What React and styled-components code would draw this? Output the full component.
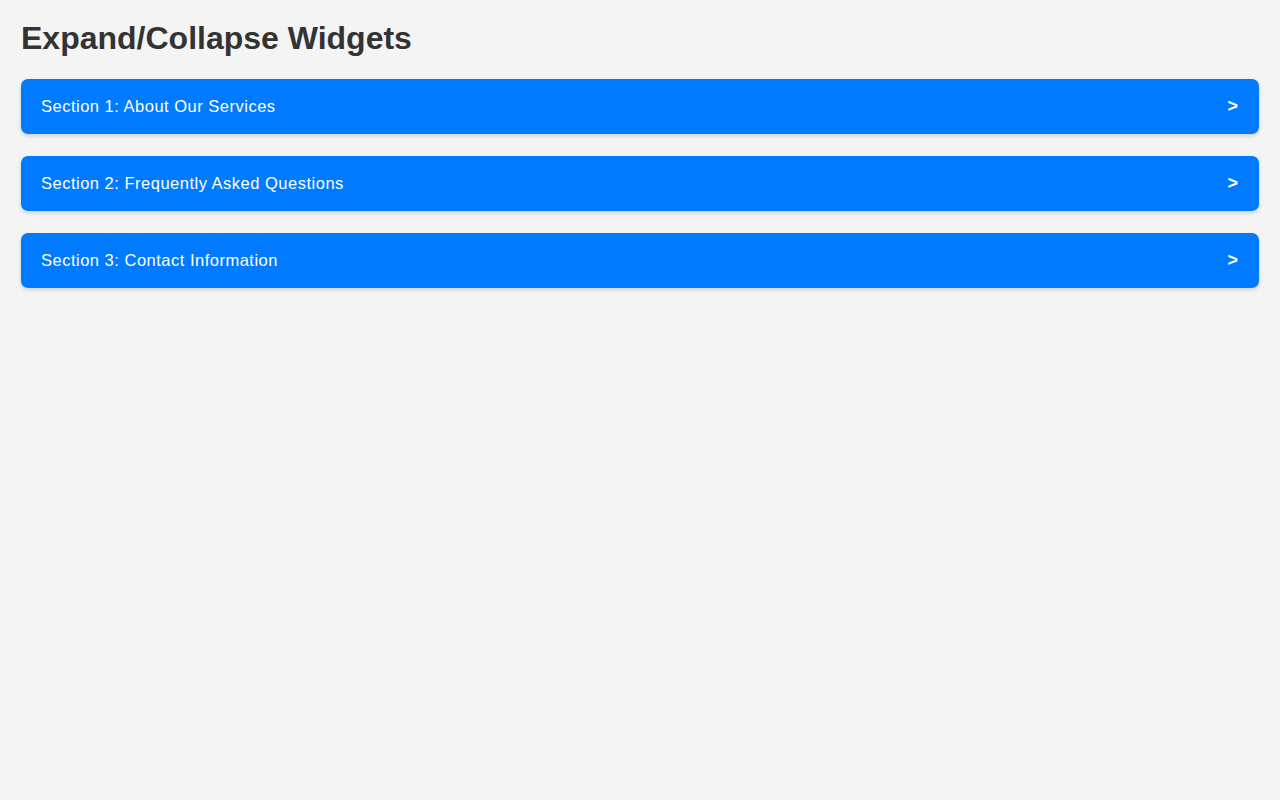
import React, { useState } from 'react';
import styled, { createGlobalStyle } from 'styled-components';

const GlobalStyle = createGlobalStyle`
    body {
        margin: 0;
        background-color: #f4f4f4;
        font-family: "Liberation Sans", Arial, Helvetica, sans-serif;
    }
`
const Page = styled.div`
    padding: 20px 21px;
`
const Title = styled.h1`
    margin: 0 0 22px;
    font-size: 32px;
    font-weight: bold;
    color: #333;
    line-height: 37px;
`
const List = styled.div`
    display: flex;
    flex-direction: column;
    gap: 22px;
`
const Section = styled.div`
    border-radius: 7px;
    box-shadow: 0 2px 4px rgba(0, 0, 0, 0.15);
    overflow: hidden;
`
const Header = styled.button`
    width: 100%;
    height: 55px;
    padding: 0 20px;
    display: flex;
    align-items: center;
    justify-content: space-between;
    background-color: #007bff;
    color: #fff;
    border: none;
    font-family: inherit;
    font-size: 16.5px;
    letter-spacing: 0.5px;
    cursor: pointer;
    text-align: left;
`
const Arrow = styled.span`
    font-size: 18px;
    font-weight: bold;
    letter-spacing: 0;
    margin-right: 1px;
    transform: rotate(${(props) => (props.open ? '90deg' : '0deg')});
    transition: transform 0.2s;
`
const Body = styled.div`
    padding: 15px 20px;
    background: #fff;
    color: #333;
    font-size: 15px;
`

const sections = [
    { id: 1, title: 'Section 1: About Our Services', text: 'We offer a wide range of services tailored to your needs.' },
    { id: 2, title: 'Section 2: Frequently Asked Questions', text: 'Find answers to the most common questions here.' },
    { id: 3, title: 'Section 3: Contact Information', text: 'Reach us by email or phone any time.' },
];

const App = () => {
    const [openId, setOpenId] = useState(null);
    return (
        <>
            <GlobalStyle />
            <Page>
                <Title>Expand/Collapse Widgets</Title>
                <List>
                    {sections.map(item => (
                        <Section key={item.id}>
                            <Header onClick={() => setOpenId(openId === item.id ? null : item.id)}>
                                <span>{item.title}</span>
                                <Arrow open={openId === item.id}>&gt;</Arrow>
                            </Header>
                            {openId === item.id && <Body>{item.text}</Body>}
                        </Section>
                    ))}
                </List>
            </Page>
        </>
    );
};

export default App;
